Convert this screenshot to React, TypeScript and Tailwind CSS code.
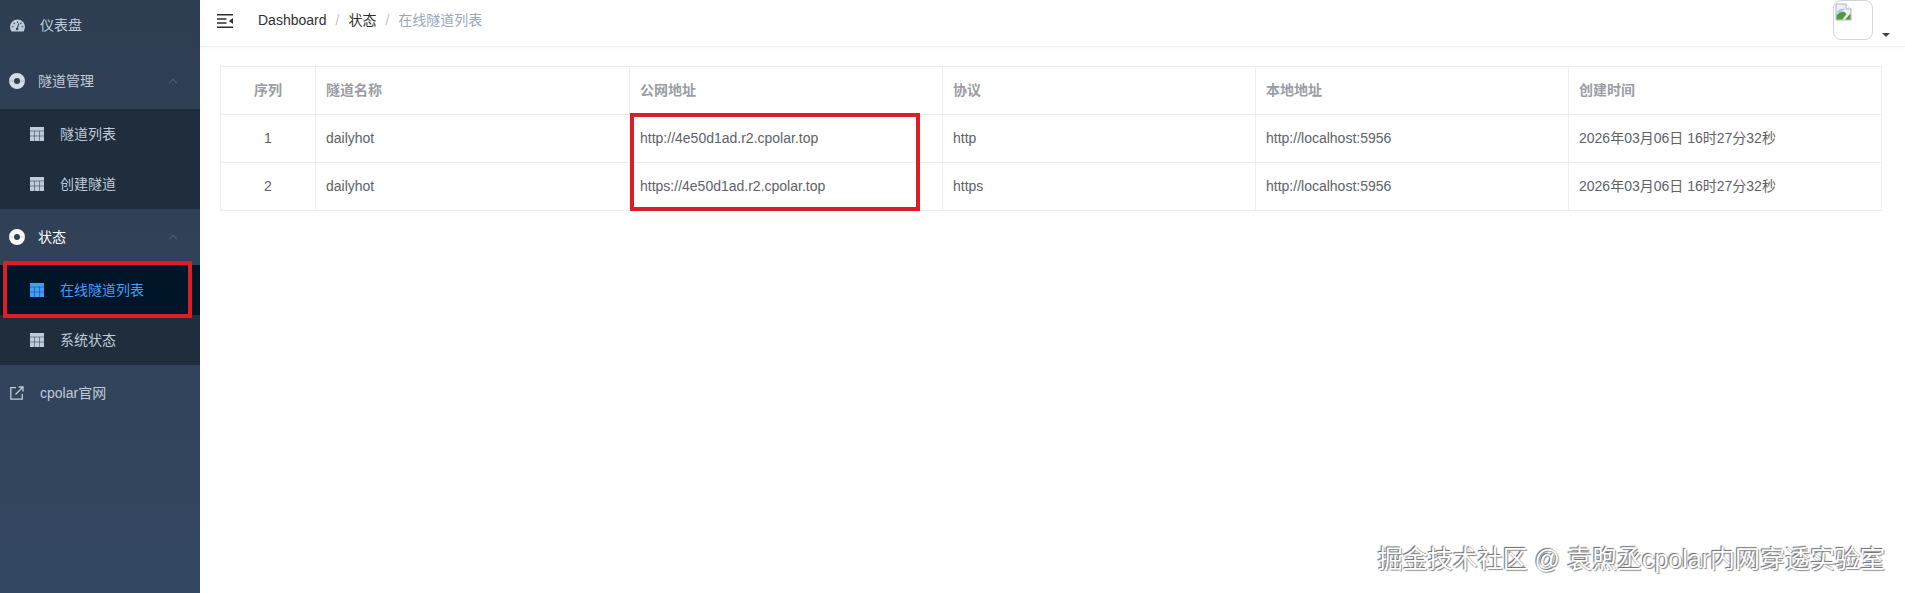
import type { ReactNode } from 'react'
import { ChevronUp } from 'lucide-react'

function TableIcon({ active = false }: { active?: boolean }) {
  return (
    <svg width="14" height="14" viewBox="0 0 14 14" className="shrink-0" aria-hidden>
      <rect width="14" height="14" fill={active ? '#409eff' : '#bfcbd9'} />
      <path
        d="M0 4h14M0 9h14M4.500 4v10M9.500 4v10"
        fill="none"
        stroke={active ? '#0b3a66' : '#1f2d3d'}
        strokeOpacity="0.6"
        strokeWidth="0.8"
      />
    </svg>
  )
}

function RingIcon({ white = false }: { white?: boolean }) {
  const color = white ? '#ffffff' : '#d3dce6'
  return (
    <svg width="16" height="16" viewBox="0 0 16 16" className="shrink-0" aria-hidden>
      <path
        fill={color}
        fillRule="evenodd"
        d="M8 0a8 8 0 1 0 0 16A8 8 0 0 0 8 0zm0 5a3 3 0 1 1 0 6 3 3 0 0 1 0-6z"
      />
      <path d="M0 8h5M11 8h5" stroke="#35465c" strokeOpacity="0.5" strokeWidth="0.5" />
    </svg>
  )
}

function GaugeIcon() {
  return (
    <svg width="15" height="13" viewBox="0 0 15 13" className="shrink-0" aria-hidden>
      <path
        fill="#bfcbd9"
        d="M7.500.4C3.400.4.100 3.700.100 7.800c0 1.700.5 3.200 1.400 4.600h12c.9-1.400 1.400-2.900 1.400-4.600C14.900 3.700 11.600.4 7.500.4z"
      />
      <path
        fill="none"
        stroke="#33445a"
        strokeWidth="1.100"
        strokeLinecap="round"
        d="M2.300 7.800h.8M3.900 4.200l.5.500M7.500 2.700v.8M11.100 4.200l-.5.500M11.900 7.800h.8M7.200 9.800 8.700 4.900"
      />
      <circle cx="7.100" cy="10" r="1.300" fill="#33445a" />
    </svg>
  )
}

function LinkIcon() {
  return (
    <svg width="14" height="14" viewBox="0 0 14 14" fill="none" stroke="#bfcbd9" strokeWidth="1.300" className="shrink-0" aria-hidden>
      <path d="M6 1.700H.8v11.500h11.500V8" />
      <path d="M5.500 8.500 12.800 1.200M8.600 1h4.400v4.400" />
    </svg>
  )
}

function SidebarSub({ label, active = false }: { label: string; active?: boolean }) {
  return (
    <div className={`flex h-[50px] items-center pl-[30px] ${active ? 'bg-[#001528]' : ''}`}>
      <TableIcon active={active} />
      <span className={`ml-[16px] text-[14px] ${active ? 'text-[#409eff]' : 'text-[#bfcbd9]'}`}>{label}</span>
    </div>
  )
}

function SidebarGroup({ label, icon, white = false }: { label: string; icon: ReactNode; white?: boolean }) {
  return (
    <div className="flex h-[56px] items-center pl-[9px] pr-[20px]">
      {icon}
      <span className={`ml-[13px] text-[14px] ${white ? 'text-white' : 'text-[#bfcbd9]'}`}>{label}</span>
      <ChevronUp size={14} strokeWidth={1.2} className="ml-auto text-[#6b7c91]" />
    </div>
  )
}

const rows = [
  { id: 1, url: 'http://4e50d1ad.r2.cpolar.top', proto: 'http' },
  { id: 2, url: 'https://4e50d1ad.r2.cpolar.top', proto: 'https' },
]

const headers = ['隧道名称', '公网地址', '协议', '本地地址', '创建时间']

export default function App() {
  return (
    <div className="relative flex h-[593px] w-[1905px] overflow-hidden bg-white font-['Liberation_Sans','Noto_Sans_CJK_SC',sans-serif]">
      <aside className="relative h-full w-[200px] shrink-0 bg-linear-to-b from-[#2e3d52] to-[#344760]">
        <div className="-mt-[3px]">
          <div className="flex h-[56px] items-center pl-[10px]">
            <GaugeIcon />
            <span className="ml-[15px] text-[14px] text-[#bfcbd9]">仪表盘</span>
          </div>
          <SidebarGroup label="隧道管理" icon={<RingIcon />} />
          <div className="bg-[#1f2d3d]">
            <SidebarSub label="隧道列表" />
            <SidebarSub label="创建隧道" />
          </div>
          <SidebarGroup label="状态" icon={<RingIcon white />} white />
          <div className="bg-[#1f2d3d]">
            <SidebarSub label="在线隧道列表" active />
            <SidebarSub label="系统状态" />
          </div>
          <div className="flex h-[56px] items-center pl-[10px]">
            <LinkIcon />
            <span className="ml-[16px] text-[14px] text-[#bfcbd9]">cpolar官网</span>
          </div>
        </div>
        <div className="absolute left-[3px] top-[261px] h-[57px] w-[189px] border-[4px] border-[#dc1f26]" />
      </aside>

      <main className="relative min-w-0 flex-1">
        <header className="flex h-[47px] items-center border-b border-[#eef0f3] shadow-[0_1px_4px_rgba(0,21,41,0.03)]">
          <svg width="16" height="14" viewBox="0 0 16 14" className="ml-[17px] -mt-[5px] shrink-0" aria-hidden>
            <path fill="#2b2f36" d="M0 0h16v1.600H0zM0 4.200h9.500v1.600H0zM0 8.200h9.500v1.600H0zM0 12.400h16V14H0zM16 4v6l-4-3z" />
          </svg>
          <nav className="ml-[25px] -mt-[5px] flex items-center text-[14px]">
            <span className="text-[#303133]">Dashboard</span>
            <span className="mx-[9px] text-[#c0c4cc]">/</span>
            <span className="text-[#303133]">状态</span>
            <span className="mx-[9px] text-[#c0c4cc]">/</span>
            <span className="text-[#97a8be]">在线隧道列表</span>
          </nav>
          <div className="ml-auto mr-[15px] flex items-start">
            <div className="-mt-[7px] h-[40px] w-[40px] rounded-[8px] border border-[#d4d4d4] bg-white">
              <svg width="18" height="18" viewBox="0 0 18 18" className="ml-[1px] mt-[2px]" aria-hidden>
                <path d="M1 1h10l5 5v11H1z" fill="#eef2f7" stroke="#aeb4bc" />
                <path d="M1.500 16.500v-4.500c3-3 6-4 8-3l2 2-4 5.500z" fill="#4d9b3a" />
                <path d="M10 16.500l5.500-6v6z" fill="#4d9b3a" />
                <path d="M2 9c1.500-3 5-4 8-3L3 11z" fill="#a9c4ec" />
                <path d="M11 1v5h5" fill="#fff" stroke="#aeb4bc" />
              </svg>
            </div>
            <span className="ml-[9px] mt-[26px] h-0 w-0 border-x-[4px] border-t-[4px] border-x-transparent border-t-[#444]" />
          </div>
        </header>

        <div className="pl-[20px] pr-[23px] pt-[19px]">
          <table className="w-full table-fixed border-collapse text-[14px] text-[#606266]">
            <colgroup>
              <col className="w-[95px]" />
              <col className="w-[314px]" />
              <col className="w-[313px]" />
              <col className="w-[313px]" />
              <col className="w-[313px]" />
              <col />
            </colgroup>
            <thead>
              <tr className="h-[48px]">
                <th className="border border-[#ebeef5] text-center text-[14px] font-semibold text-[#9a9da3]">序列</th>
                {headers.map((h) => (
                  <th key={h} className="border border-[#ebeef5] pl-[10px] text-left text-[14px] font-semibold text-[#9a9da3]">
                    {h}
                  </th>
                ))}
              </tr>
            </thead>
            <tbody>
              {rows.map((r) => (
                <tr key={r.id} className="h-[48px]">
                  <td className="border border-[#ebeef5] text-center">{r.id}</td>
                  <td className="border border-[#ebeef5] pl-[10px]">dailyhot</td>
                  <td className="border border-[#ebeef5] pl-[10px]">{r.url}</td>
                  <td className="border border-[#ebeef5] pl-[10px]">{r.proto}</td>
                  <td className="border border-[#ebeef5] pl-[10px]">http://localhost:5956</td>
                  <td className="border border-[#ebeef5] pl-[10px]">2026年03月06日 16时27分32秒</td>
                </tr>
              ))}
            </tbody>
          </table>
        </div>

        <div className="absolute left-[430px] top-[113px] h-[98px] w-[290px] border-[4px] border-[#dc1f26]" />
        <div className="absolute bottom-[19px] right-[20px] text-[25px] leading-[30px] text-white [text-shadow:1px_1px_1px_#888,-1px_-1px_1px_#666]">
          掘金技术社区 @ 袁煦丞cpolar内网穿透实验室
        </div>
      </main>
    </div>
  )
}
